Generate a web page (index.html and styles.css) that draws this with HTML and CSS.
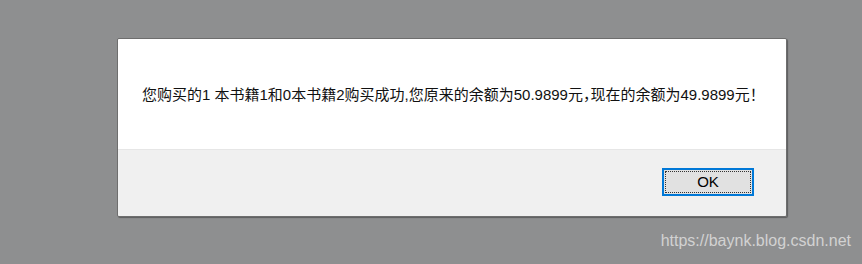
FILE: index.html
```html
<!DOCTYPE html>
<html lang="zh">
<head>
<meta charset="utf-8">
<title>Alert</title>
<link rel="stylesheet" href="styles.css">
</head>
<body>
<div class="page">
  <div class="dialog">
    <div class="dialog-body">
      <p class="message">您购买的1 本书籍1和0本书籍2购买成功,您原来的余额为50.9899元<span class="half-punct">，</span>现在的余额为49.9899元<span class="center-punct">！</span></p>
    </div>
    <div class="dialog-footer">
      <button class="ok-btn"><span class="ok-label">OK</span></button>
    </div>
  </div>
  <div class="watermark">https://baynk.blog.csdn.net</div>
</div>
</body>
</html>
```

FILE: styles.css
```css
html, body {
  margin: 0;
  padding: 0;
  height: 100%;
}
body {
  background: #8e8f90;
  font-family: "Liberation Sans", "Noto Sans CJK SC", sans-serif;
}
.page {
  display: flex;
  flex-direction: column;
  padding: 38px 0 0 117px;
}
.dialog {
  width: 668px;
  border: 1px solid #6e6e6e;
  border-radius: 2px;
  box-shadow: 1px 1px 1px rgba(0, 0, 0, 0.35);
  overflow: hidden;
}
.dialog-body {
  height: 110px;
  background: #ffffff;
  display: flex;
  align-items: center;
  padding-left: 24px;
  padding-bottom: 1px;
  box-sizing: border-box;
}
.message {
  margin: 0;
  font-size: 15px;
  color: #111;
  white-space: nowrap;
  letter-spacing: 0;
}
.half-punct {
  font-feature-settings: "halt";
}
.center-punct {
  font-family: "Noto Sans CJK JP", "Noto Sans CJK SC", sans-serif;
}
.dialog-footer {
  height: 67px;
  background: #f0f0f0;
  border-top: 1px solid #e6e6e6;
  box-sizing: border-box;
  display: flex;
  justify-content: flex-end;
  align-items: center;
  padding-right: 32px;
  padding-bottom: 3px;
}
.ok-btn {
  width: 92px;
  height: 28px;
  box-sizing: border-box;
  border: 2px solid #0078d7;
  background: #e1e1e1;
  padding: 1px;
  margin: 0;
  display: flex;
  font-family: "Liberation Sans", sans-serif;
}
.ok-label {
  flex: 1;
  display: flex;
  align-items: center;
  justify-content: center;
  border: 1px dotted #333;
  font-size: 15px;
  color: #000;
}
.watermark {
  align-self: flex-end;
  margin-top: 15px;
  padding-right: 11px;
  font-size: 16px;
  line-height: 18px;
  color: #d2d2d2;
}
```
